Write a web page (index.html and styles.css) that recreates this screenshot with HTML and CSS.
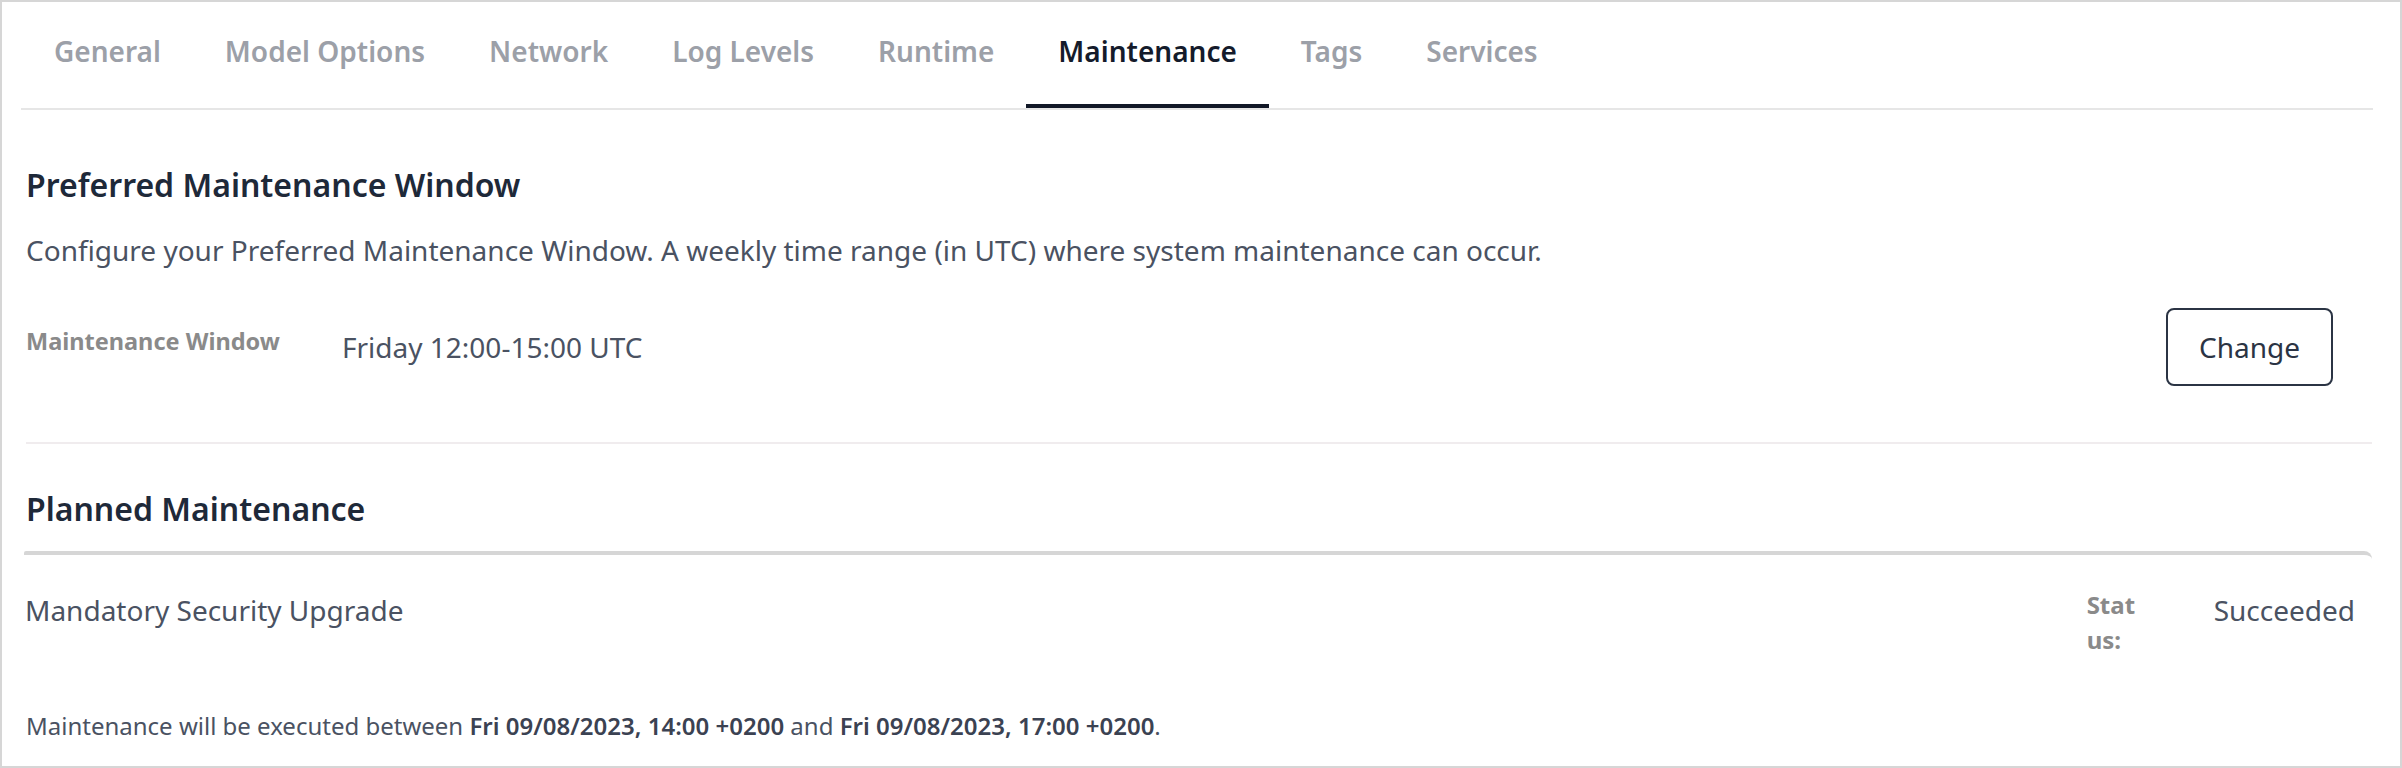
FILE: index.html
```html
<!DOCTYPE html>
<html lang="en">
<head>
<meta charset="utf-8">
<title>Maintenance</title>
<link rel="stylesheet" href="styles.css">
</head>
<body>
<div class="frame">
  <nav class="tabs">
    <a class="tab">General</a>
    <a class="tab">Model Options</a>
    <a class="tab">Network</a>
    <a class="tab">Log Levels</a>
    <a class="tab">Runtime</a>
    <a class="tab active">Maintenance</a>
    <a class="tab">Tags</a>
    <a class="tab">Services</a>
  </nav>

  <section class="window-section">
    <h2 class="section-title">Preferred Maintenance Window</h2>
    <p class="description">Configure your Preferred Maintenance Window. A weekly time range (in UTC) where system maintenance can occur.</p>
    <div class="window-row">
      <span class="field-label">Maintenance Window</span>
      <span class="field-value">Friday 12:00-15:00 UTC</span>
      <button class="btn-outline">Change</button>
    </div>
  </section>

  <section class="planned-section">
    <h2 class="section-title">Planned Maintenance</h2>
    <div class="planned-table">
      <div class="planned-row">
        <span class="planned-name">Mandatory Security Upgrade</span>
        <span class="status-label">Status:</span>
        <span class="status-value">Succeeded</span>
      </div>
      <p class="planned-note">Maintenance will be executed between <b>Fri 09/08/2023, 14:00 +0200</b> and <b>Fri 09/08/2023, 17:00 +0200</b>.</p>
    </div>
  </section>
</div>
</body>
</html>
```
FILE: styles.css
```css
html, body {
  margin: 0;
  padding: 0;
  background: #ffffff;
}

body {
  font-family: "Noto Sans", "Open Sans", sans-serif;
  color: #4a5262;
}

.frame {
  box-sizing: border-box;
  width: 2402px;
  height: 768px;
  border: 2px solid #d6d6d6;
  padding: 0 27px 0 19px;
  overflow: hidden;
}

/* Tabs */
.tabs {
  display: flex;
  border-bottom: 2px solid #e6e6e6;
}

.tab {
  display: block;
  padding: 31px 32px 35px;
  font-size: 28px;
  line-height: 36px;
  font-weight: 600;
  color: #9ca0a8;
  border-bottom: 4px solid transparent;
  cursor: pointer;
}

.tab:first-child {
  padding-left: 33px;
}

.tab.active {
  color: #141b2b;
  border-bottom-color: #111827;
}

/* Sections */
.window-section {
  margin-left: 5px;
  margin-right: 1px;
  padding: 55px 0 56px;
  border-bottom: 2px solid #f0ecee;
}

.section-title {
  margin: 0;
  font-size: 32px;
  line-height: 40px;
  font-weight: 600;
  color: #1e2939;
}

.description {
  margin: 25px 0 0;
  font-size: 28px;
  line-height: 40px;
  color: #4a5262;
}

.window-row {
  display: flex;
  align-items: center;
  margin-top: 38px;
}

.field-label {
  width: 316px;
  flex: none;
  font-size: 23.5px;
  line-height: 30px;
  font-weight: 700;
  color: #8a8a8a;
  margin-bottom: 12px;
}

.field-value {
  flex: 1;
  font-size: 28px;
  line-height: 40px;
  color: #4a5262;
}

.btn-outline {
  box-sizing: border-box;
  width: 167px;
  height: 78px;
  margin-right: 39px;
  padding-bottom: 2px;
  border: 2px solid #2b3444;
  border-radius: 8px;
  background: #ffffff;
  font-family: inherit;
  font-size: 28px;
  color: #2b3444;
  cursor: pointer;
}

.planned-section {
  margin-left: 5px;
  margin-right: 1px;
  padding-top: 45px;
}

.planned-table {
  margin-top: 22px;
  margin-left: -2px;
  border-top: 4px solid #d6d6d6;
  border-top-right-radius: 8px;
  border-top-left-radius: 2px;
}

.planned-row {
  display: flex;
  align-items: flex-start;
  padding: 35px 17px 0 1px;
}

.planned-name {
  flex: 1;
  font-size: 28px;
  line-height: 40px;
  color: #4a5262;
}

.status-label {
  width: 56px;
  margin-top: -3px;
  font-size: 24px;
  line-height: 35px;
  font-weight: 700;
  color: #8a8a8a;
  word-break: break-all;
}

.status-value {
  margin-left: 71px;
  font-size: 28px;
  line-height: 40px;
  color: #4a5262;
}

.planned-note {
  margin: 53px 0 0 2px;
  font-size: 24px;
  line-height: 32px;
  color: #4a5262;
}

.planned-note b {
  font-weight: 600;
  color: #3b4252;
}
```
